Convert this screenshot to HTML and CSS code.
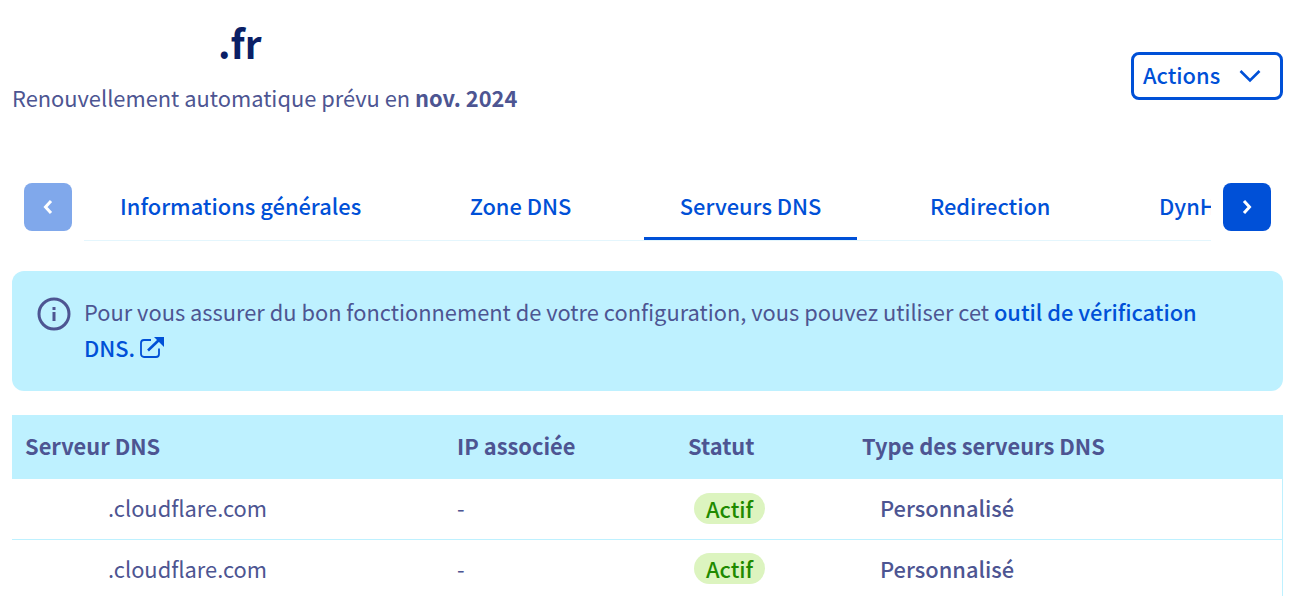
FILE: index.html
```html
<!DOCTYPE html>
<html lang="fr">

<head>
    <meta charset="UTF-8">
    <title>Serveurs DNS</title>
    <link rel="stylesheet" href="styles.css">
</head>

<body>
    <!-- titre + actions -->
    <div class="top">
        <div>
            <h1 class="domain"><span class="masked"></span>.fr</h1>
            <p class="renew">Renouvellement automatique prévu en <strong>nov. 2024</strong></p>
        </div>
        <button class="actions" type="button">
            <span class="actions-label">Actions</span>
            <svg width="22" height="14" viewBox="0 0 22 14"><path d="M1.500 2L11 11.500 20.500 2" fill="none" stroke="currentColor" stroke-width="2.600"/></svg>
        </button>
    </div>

    <!-- onglets -->
    <div class="tabs">
        <button class="arrow disabled" type="button">
            <svg width="12" height="16" viewBox="0 0 12 16"><path d="M9 2L3.500 8 9 14" fill="none" stroke="currentColor" stroke-width="3"/></svg>
        </button>
        <div class="tab-list">
            <a class="tab">Informations générales</a>
            <a class="tab">Zone DNS</a>
            <a class="tab active">Serveurs DNS</a>
            <a class="tab">Redirection</a>
            <a class="tab">DynHost</a>
        </div>
        <button class="arrow" type="button">
            <svg width="12" height="16" viewBox="0 0 12 16"><path d="M3 2l5.500 6L3 14" fill="none" stroke="currentColor" stroke-width="3"/></svg>
        </button>
    </div>

    <!-- message -->
    <div class="notice">
        <svg class="notice-icon" width="34" height="34" viewBox="0 0 34 34">
            <circle cx="17" cy="17" r="15" fill="none" stroke="currentColor" stroke-width="3"/>
            <rect x="15.500" y="15" width="3" height="9" fill="currentColor"/>
            <rect x="15.500" y="10" width="3" height="3" fill="currentColor"/>
        </svg>
        <p>Pour vous assurer du bon fonctionnement de votre configuration, vous pouvez utiliser cet <a class="link">outil de vérification DNS. <svg class="ext" width="25" height="22" viewBox="0 0 25 22"><path d="M19 12.500V18a3 3 0 0 1-3 3H4a3 3 0 0 1-3-3V7a3 3 0 0 1 3-3h7" fill="none" stroke="currentColor" stroke-width="1.800"/><path d="M8 14.500L20 3" fill="none" stroke="currentColor" stroke-width="2.600"/><path d="M14 1h10v10z" fill="currentColor"/></svg></a></p>
    </div>

    <!-- tableau -->
    <table class="dns">
        <thead>
            <tr>
                <th class="col-server">Serveur DNS</th>
                <th class="col-ip">IP associée</th>
                <th class="col-status">Statut</th>
                <th>Type des serveurs DNS</th>
            </tr>
        </thead>
        <tbody>
            <tr>
                <td><span class="masked-ns"></span>.cloudflare.com</td>
                <td>-</td>
                <td><span class="badge">Actif</span></td>
                <td><span class="type">Personnalisé</span></td>
            </tr>
            <tr>
                <td><span class="masked-ns"></span>.cloudflare.com</td>
                <td>-</td>
                <td><span class="badge">Actif</span></td>
                <td><span class="type">Personnalisé</span></td>
            </tr>
        </tbody>
    </table>
</body>

</html>
```

FILE: styles.css
```css
* {
    margin: 0;
    padding: 0;
    box-sizing: border-box;
}

html,
body {
    height: 596px;
    overflow: hidden;
}

body {
    padding: 0 17px 0 12px;
    background: #fff;
    color: #4d5592;
    font-family: "Noto Sans CJK SC", "Noto Sans", sans-serif;
    font-size: 21.85px;
    line-height: 32px;
}

button {
    font-family: inherit;
    background: none;
    border: none;
}

.top {
    display: flex;
    justify-content: space-between;
    align-items: flex-start;
    padding-top: 18px;
}

.domain {
    color: #0b1f66;
    font-size: 38.500px;
    line-height: 48px;
    font-weight: 700;
}

.masked {
    display: inline-block;
    width: 206px;
}

.renew {
    margin-top: 16px;
}

.renew strong {
    font-weight: 700;
}

.actions {
    display: flex;
    align-items: center;
    justify-content: space-between;
    width: 152px;
    height: 48px;
    margin-top: 34px;
    padding: 0 19px 0 9px;
    border: 3px solid #0050d7;
    border-radius: 8px;
    color: #0050d7;
    font-size: 21.85px;
    font-weight: 500;
    background: #fff;
}

.actions-label {
    margin-bottom: 3px;
}

.tabs {
    display: flex;
    margin-top: 69px;
    padding: 0 12px;
}

.arrow {
    display: flex;
    align-items: center;
    justify-content: center;
    flex: none;
    width: 48px;
    height: 48px;
    border-radius: 8px;
    background: #0050d7;
    color: #fff;
}

.arrow.disabled {
    background: #80a8eb;
}

.tab-list {
    display: flex;
    gap: 36.500px;
    flex: 1;
    height: 58px;
    margin: 0 12px;
    overflow: hidden;
    border-bottom: 1px solid #e4f6fd;
}

.tab {
    flex: none;
    height: 57px;
    padding: 7px 36px 0;
    color: #0050d7;
    font-weight: 500;
    white-space: nowrap;
}

.tab.active {
    border-bottom: 3px solid #0050d7;
}

.notice {
    display: flex;
    gap: 13px;
    height: 120px;
    margin-top: 30px;
    padding: 23px 80px 0 25px;
    border-radius: 12px;
    background: #bef1ff;
}

.notice-icon {
    flex: none;
    margin-top: 3px;
}

.notice p {
    line-height: 36px;
}

.link {
    color: #0050d7;
    font-weight: 500;
}

.ext {
    vertical-align: -1px;
}

.dns {
    width: 100%;
    margin-top: 24px;
    border-collapse: collapse;
    table-layout: fixed;
}

.dns th {
    height: 64px;
    padding: 0 13px 2px;
    background: #bef1ff;
    font-weight: 700;
    text-align: left;
}

.dns td {
    height: 60px;
    padding: 0 13px 1px;
    border-bottom: 1px solid #bef1ff;
}

.dns tr td:last-child {
    border-right: 1px solid #bef1ff;
}

.col-server {
    width: 432px;
}

.col-ip {
    width: 231px;
}

.col-status {
    width: 174px;
}

.masked-ns {
    display: inline-block;
    width: 83px;
}

.badge {
    display: inline-block;
    height: 31px;
    margin: 1px 0 0 6px;
    padding: 0 12px;
    border-radius: 16px;
    background: #dcf4bf;
    color: #1f8a00;
    font-weight: 500;
    line-height: 31px;
}

.type {
    margin-left: 18px;
    font-weight: 500;
}
```
